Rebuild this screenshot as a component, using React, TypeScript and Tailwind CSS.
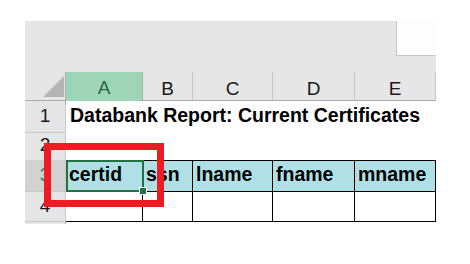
const cols = "grid grid-cols-[41px_77px_50px_80px_82px_81px]";

const Corner = () => (
  <div className="relative border-r border-[#ababab]">
    <svg width="22" height="22" viewBox="0 0 22 22" className="absolute left-[18px] top-[4px]">
      <polygon points="21,0 21,21 0,21" fill="#b4b4b4" />
    </svg>
  </div>
);

const RowHead = ({ n, on }: { n: string; on?: boolean }) => (
  <div
    className={`flex items-center justify-center border-r border-b border-[#c8c8c8] text-[19px] ${
      on ? "bg-[#d2d2d2] text-[#3d7a5a]" : "text-[#1a1a1a]"
    }`}
  >
    {n}
  </div>
);

export default function App() {
  const heads = ["A", "B", "C", "D", "E"];
  const fields = ["certid", "ssn", "lname", "fname", "mname"];
  return (
    <div className="w-[470px] h-[264px] bg-white pt-[21px] pl-[25px] overflow-hidden" style={{ fontFamily: '"Liberation Sans", Arial, sans-serif' }}>
      <div className="relative w-[411px] bg-[#e6e6e6]">
        <div className="h-[51px] flex justify-end">
          <div className="w-[40px] h-[35px] bg-[#fdfdfd] border-l border-b border-[#c6c6c6]" />
        </div>

        <div className={`${cols} h-[29px] border-b border-[#ababab]`}>
          <Corner />
          {heads.map((h, i) => (
            <div
              key={h}
              className={`flex items-center justify-center text-[19px] pt-[2px] ${
                i === 0
                  ? "bg-[#9fd5b7] text-[#1e6b43] border-b-2 border-[#217346] border-r border-r-[#ababab]"
                  : "text-[#1a1a1a] border-r border-[#c6c6c6]"
              }`}
            >
              {h}
            </div>
          ))}
        </div>

        <div className={`${cols} h-[30px]`}>
          <RowHead n="1" />
          <div className="col-span-5 bg-white border-b border-[#d9d9d9] flex items-end pl-[4px] pb-[2px] font-bold text-[19.5px] text-black whitespace-nowrap">
            Databank Report: Current Certificates
          </div>
        </div>

        <div className={`${cols} h-[29px]`}>
          <RowHead n="2" />
          <div className="col-span-5 bg-white" />
        </div>

        <div className={`${cols} h-[32px]`}>
          <RowHead n="3" on />
          {fields.map((f) => (
            <div
              key={f}
              className="bg-[#b0e0e6] border-t border-b border-r border-black flex items-end pl-[3px] pb-[2px] font-bold text-[19.5px] text-black whitespace-nowrap overflow-hidden"
            >
              {f}
            </div>
          ))}
        </div>

        <div className={`${cols} h-[30px]`}>
          <RowHead n="4" />
          {fields.map((f) => (
            <div key={f} className="bg-white border-b border-r border-black" />
          ))}
        </div>

        <div className={`${cols} h-[2px]`}>
          <div className="border-r border-[#ababab]" />
          <div className="col-span-5 bg-white" />
        </div>

        <div className="absolute left-[41px] top-[139px] w-[78px] h-[32px] border-2 border-[#217346]" />
        <div className="absolute left-[114px] top-[166px] w-[8px] h-[8px] bg-[#217346] border border-white" />
        <div className="absolute left-[19px] top-[122px] w-[120px] h-[64px] border-[7px] border-[#ed1c24]" />
      </div>
    </div>
  );
}
